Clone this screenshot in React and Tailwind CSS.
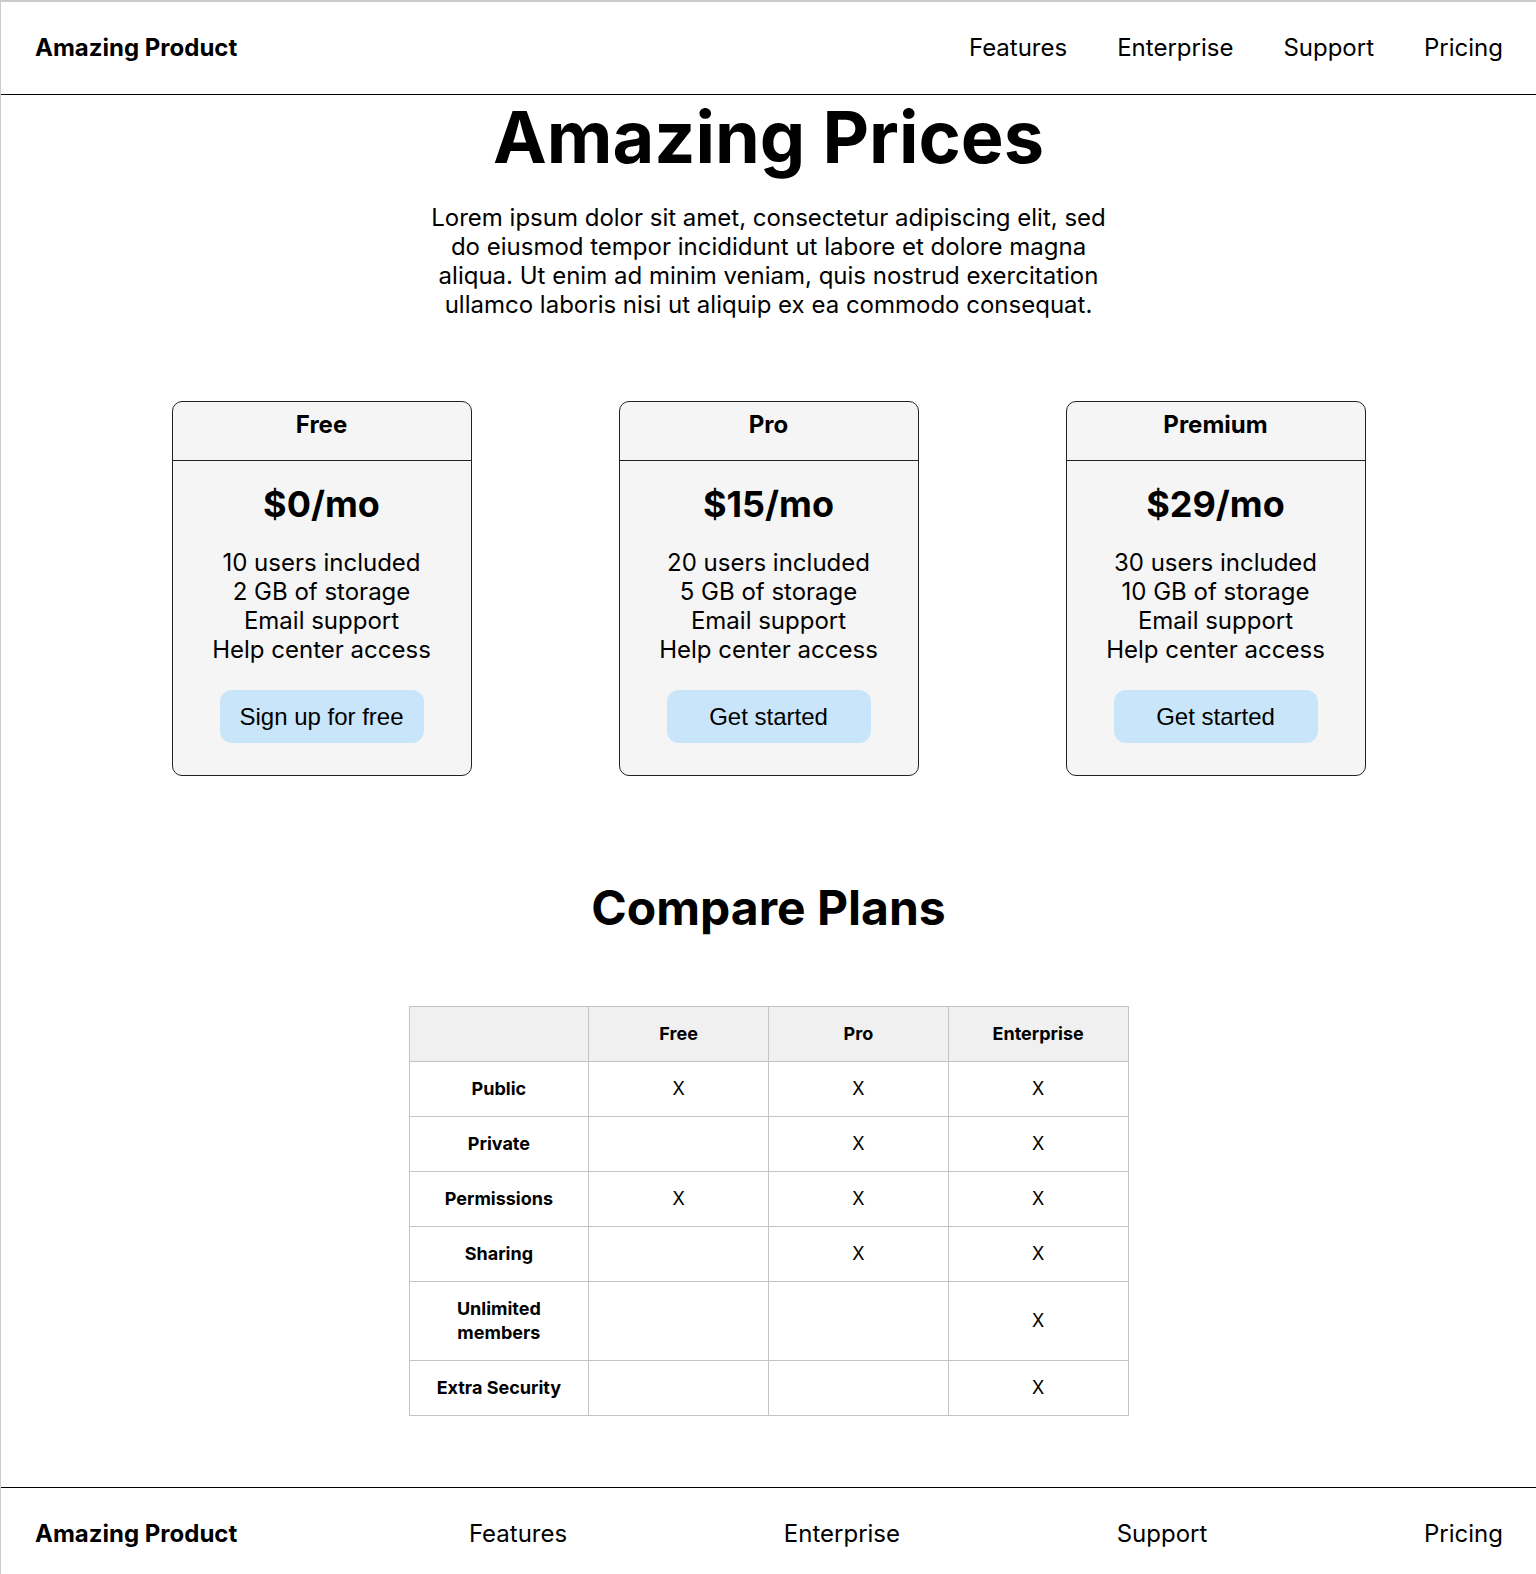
import React from 'react';

const plans = [
  { name: 'Free', price: '$0/mo', users: '10 users included', storage: '2 GB of storage', cta: 'Sign up for free' },
  { name: 'Pro', price: '$15/mo', users: '20 users included', storage: '5 GB of storage', cta: 'Get started' },
  { name: 'Premium', price: '$29/mo', users: '30 users included', storage: '10 GB of storage', cta: 'Get started' },
];

const features = [
  { name: 'Public', free: true, pro: true, ent: true },
  { name: 'Private', free: false, pro: true, ent: true },
  { name: 'Permissions', free: true, pro: true, ent: true },
  { name: 'Sharing', free: false, pro: true, ent: true },
  { name: 'Unlimited members', free: false, pro: false, ent: true },
  { name: 'Extra Security', free: false, pro: false, ent: true },
];

const links = ['Features', 'Enterprise', 'Support', 'Pricing'];

function PlanCard({ plan }) {
  return (
    <div className="w-[300px] rounded-[10px] border border-[#222] bg-[#f5f5f5] text-center">
      <div className="border-b border-[#222] pt-[8px] pb-[21px] text-[24px] font-bold leading-[29px]">
        {plan.name}
      </div>
      <div className="flex flex-col items-center pt-[21px] pb-[32px]">
        <div className="text-[36px] font-bold leading-[44px]">{plan.price}</div>
        <ul className="mt-[22px] text-[24px] leading-[29px]">
          <li>{plan.users}</li>
          <li>{plan.storage}</li>
          <li>Email support</li>
          <li>Help center access</li>
        </ul>
        <button className="mt-[26px] h-[53px] w-[204px] rounded-[12px] bg-[#c8e5fa] text-[24px] font-['Liberation_Sans',Arial,sans-serif]">
          {plan.cta}
        </button>
      </div>
    </div>
  );
}

export default function App() {
  return (
    <div className="min-h-screen border-t-2 border-l border-[#cccccc] bg-white text-black font-['Inter',sans-serif]">
      <header className="flex items-center justify-between border-b border-black pt-[31px] pb-[32px] pl-[34px] pr-[33px] text-[24px] leading-[29px]">
        <div className="font-bold">Amazing Product</div>
        <nav className="flex gap-[50px]">
          {links.map((l) => (
            <a key={l} href="#">{l}</a>
          ))}
        </nav>
      </header>

      <main className="flex flex-col items-center">
        <h1 className="text-[72px] font-bold leading-[83px]">Amazing Prices</h1>
        <p className="mt-[25px] w-[690px] text-center text-[24px] leading-[29px]">
          Lorem ipsum dolor sit amet, consectetur adipiscing elit, sed do eiusmod tempor incididunt ut labore et
          dolore magna aliqua. Ut enim ad minim veniam, quis nostrud exercitation ullamco laboris nisi ut aliquip ex
          ea commodo consequat.
        </p>

        <div className="mt-[82px] flex gap-[147px]">
          {plans.map((p) => (
            <PlanCard key={p.name} plan={p} />
          ))}
        </div>

        <h2 className="mt-[103px] text-[48px] font-bold leading-[58px]">Compare Plans</h2>

        <table className="mt-[69px] w-[720px] table-fixed border-collapse text-center text-[18px] leading-6">
          <thead>
            <tr className="bg-[#f0f0f0]">
              <th className="border border-[#c4c4c4] px-5 py-[15px]"></th>
              <th className="border border-[#c4c4c4] px-5 py-[15px] font-bold">Free</th>
              <th className="border border-[#c4c4c4] px-5 py-[15px] font-bold">Pro</th>
              <th className="border border-[#c4c4c4] px-5 py-[15px] font-bold">Enterprise</th>
            </tr>
          </thead>
          <tbody>
            {features.map((f) => (
              <tr key={f.name}>
                <td className="border border-[#c4c4c4] px-5 py-[15px] font-bold">{f.name}</td>
                <td className="border border-[#c4c4c4] px-5 py-[15px]">{f.free ? 'X' : ''}</td>
                <td className="border border-[#c4c4c4] px-5 py-[15px]">{f.pro ? 'X' : ''}</td>
                <td className="border border-[#c4c4c4] px-5 py-[15px]">{f.ent ? 'X' : ''}</td>
              </tr>
            ))}
          </tbody>
        </table>
      </main>

      <footer className="mt-[71px] flex items-center justify-between border-t border-black pt-[31px] pb-[26px] pl-[34px] pr-[33px] text-[24px] leading-[29px]">
        <div className="mr-[15px] font-bold">Amazing Product</div>
        {links.map((l) => (
          <a key={l} href="#">{l}</a>
        ))}
      </footer>
    </div>
  );
}
